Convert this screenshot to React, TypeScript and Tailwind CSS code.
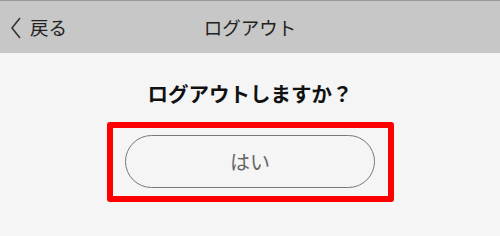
import React from "react";

export default function App() {
  return (
    <div
      className="w-[500px] h-[236px] bg-[#f5f5f5] flex flex-col"
      style={{ fontFamily: '"Noto Sans CJK JP", "Noto Sans", sans-serif' }}
    >
      <div className="h-[53px] bg-[#c6c7c6] border-t border-[#9a9a9a] relative flex items-center justify-center">
        <div className="absolute left-[10px] top-0 h-full flex items-center gap-[8px] text-[18.5px] text-[#222]">
          <svg width="12" height="22" viewBox="0 0 12 22" className="mt-[1px]">
            <polyline points="10,1 2,11 10,21" fill="none" stroke="#333" strokeWidth="1.6" />
          </svg>
          <span className="leading-none">戻る</span>
        </div>
        <span className="text-[18.5px] text-[#222] leading-none">ログアウト</span>
      </div>
      <div className="flex flex-col items-center">
        <div className="mt-[30px] text-[20.5px] font-bold text-[#111] leading-none">ログアウトしますか？</div>
        <div className="mt-[18px] w-[287px] h-[80px] border-[6px] border-[#ff0000] rounded-[3px] flex items-center justify-center">
          <div className="w-[250px] h-[53px] rounded-full border border-[#777] flex items-center justify-center text-[20px] text-[#666]">
            はい
          </div>
        </div>
      </div>
    </div>
  );
}
